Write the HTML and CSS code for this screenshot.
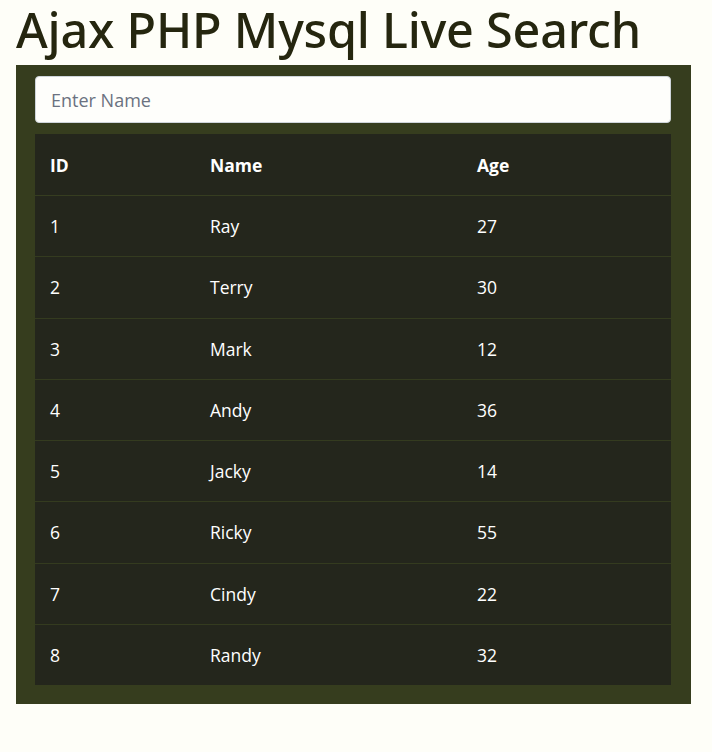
FILE: index.html
```html
<!DOCTYPE html>
<html>
<head>
<meta charset="utf-8">
<title>Ajax PHP Mysql Live Search</title>
<link rel="stylesheet" href="styles.css">
</head>
<body>
<div class="page">
  <h1 class="title">Ajax PHP Mysql Live Search</h1>
  <div class="panel">
    <input class="search" type="text" placeholder="Enter Name">
    <table class="results">
      <thead>
        <tr><th class="c-id">ID</th><th class="c-name">Name</th><th class="c-age">Age</th></tr>
      </thead>
      <tbody>
        <tr><td>1</td><td>Ray</td><td>27</td></tr>
        <tr><td>2</td><td>Terry</td><td>30</td></tr>
        <tr><td>3</td><td>Mark</td><td>12</td></tr>
        <tr><td>4</td><td>Andy</td><td>36</td></tr>
        <tr><td>5</td><td>Jacky</td><td>14</td></tr>
        <tr><td>6</td><td>Ricky</td><td>55</td></tr>
        <tr><td>7</td><td>Cindy</td><td>22</td></tr>
        <tr><td>8</td><td>Randy</td><td>32</td></tr>
      </tbody>
    </table>
  </div>
</div>
</body>
</html>
```

FILE: styles.css
```css
html, body {
  margin: 0;
  padding: 0;
  background: #fefef8;
}
body {
  font-family: "Open Sans", "Noto Sans", sans-serif;
  color: #212529;
}
.page {
  padding: 0 21px 0 16px;
}
.title {
  margin: 0;
  height: 65px;
  font-family: "Noto Sans", "Open Sans", sans-serif;
  font-weight: 500;
  font-size: 48.5px;
  line-height: 58px;
  color: #25260f;
  letter-spacing: -0.2px;
  white-space: nowrap;
}
.panel {
  background: #363d1e;
  padding: 11px 20px 19px 19px;
  display: flex;
  flex-direction: column;
  gap: 11px;
}
.search {
  box-sizing: border-box;
  width: 100%;
  height: 47px;
  margin: 0;
  padding: 0 15px;
  border: 1px solid #ced4da;
  border-radius: 4px;
  background: #fefefb;
  font-family: "Open Sans", sans-serif;
  font-size: 18px;
  color: #495057;
  outline: none;
}
.search::placeholder {
  color: #6b7280;
}
.results {
  width: 100%;
  border-collapse: collapse;
  background: #24261c;
  color: #ffffff;
  font-size: 17.5px;
  table-layout: fixed;
}
.results th, .results td {
  text-align: left;
  padding: 0 15px;
  vertical-align: middle;
}
.results th {
  height: 61px;
  font-weight: 700;
  border-bottom: 1px solid #363d20;
}
.results td {
  height: 60.25px;
  border-top: 1px solid #343b1f;
}
.results tbody tr:first-child td {
  border-top: none;
}
.c-id { width: 130px; }
.c-name { width: 237px; }
.c-age { width: auto; }
```
